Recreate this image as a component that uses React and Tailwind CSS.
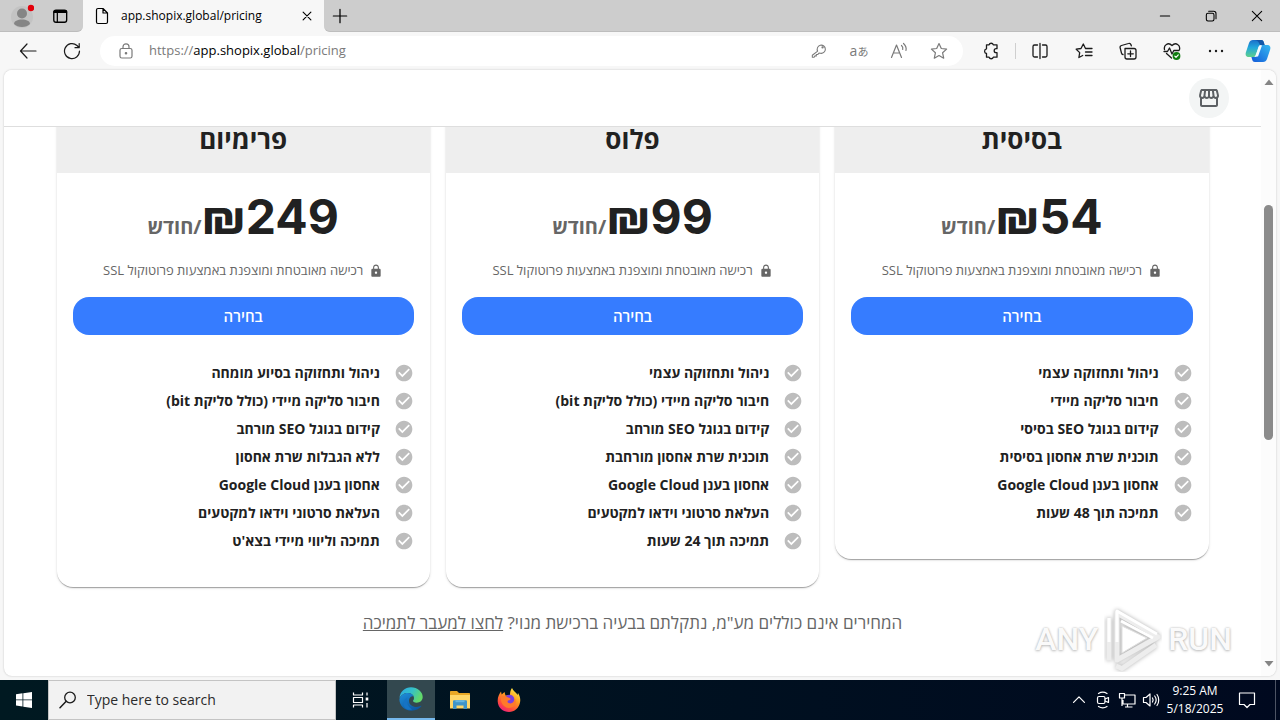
import React from "react";
import { MdOutlineStorefront, MdCheckCircle, MdLock } from "react-icons/md";

const plans = [
  {
    name: "בסיסית",
    price: "₪54",
    features: [
      "ניהול ותחזוקה עצמי",
      "חיבור סליקה מיידי",
      "קידום בגוגל SEO בסיסי",
      "תוכנית שרת אחסון בסיסית",
      "אחסון בענן Google Cloud",
      "תמיכה תוך 48 שעות",
    ],
  },
  {
    name: "פלוס",
    price: "₪99",
    features: [
      "ניהול ותחזוקה עצמי",
      "חיבור סליקה מיידי (כולל סליקת bit)",
      "קידום בגוגל SEO מורחב",
      "תוכנית שרת אחסון מורחבת",
      "אחסון בענן Google Cloud",
      "העלאת סרטוני וידאו למקטעים",
      "תמיכה תוך 24 שעות",
    ],
  },
  {
    name: "פרימיום",
    price: "₪249",
    features: [
      "ניהול ותחזוקה בסיוע מומחה",
      "חיבור סליקה מיידי (כולל סליקת bit)",
      "קידום בגוגל SEO מורחב",
      "ללא הגבלות שרת אחסון",
      "אחסון בענן Google Cloud",
      "העלאת סרטוני וידאו למקטעים",
      "תמיכה וליווי מיידי בצא'ט",
    ],
  },
];

const Icon = ({ size = 18, className = "", children }) => (
  <svg
    width={size}
    height={size}
    viewBox="0 0 18 18"
    fill="none"
    stroke="currentColor"
    strokeWidth="1.2"
    strokeLinecap="round"
    strokeLinejoin="round"
    className={className}
    aria-hidden="true"
  >
    {children}
  </svg>
);

const BarButton = ({ label, className = "w-11", children }) => (
  <button aria-label={label} className={`flex h-full shrink-0 items-center justify-center ${className}`}>
    {children}
  </button>
);

const TabStrip = () => (
  <div className="flex h-8 shrink-0 bg-[#f7f7f7]">
    <div className="flex w-[83px] shrink-0 items-center rounded-br-md border-b border-[#bdbdbd] bg-[#cdcdcd]">
      <BarButton label="Profile">
        <svg width="24" height="26" viewBox="0 0 24 26" aria-hidden="true">
          <circle cx="12" cy="14" r="11" fill="#c3c3c3" />
          <circle cx="12" cy="10.500" r="5" fill="#858585" />
          <path d="M4 21c0-3 3.500-4.500 8-4.500s8 1.500 8 4.500c-2 2-4.500 3-8 3s-6-1-8-3z" fill="#858585" />
          <circle cx="21" cy="5" r="3.200" fill="#e3000b" />
        </svg>
      </BarButton>
      <BarButton label="Tab actions" className="w-8">
        <Icon size={16}>
          <rect x="2" y="2.500" width="14.500" height="13.500" rx="2.500" strokeWidth="1.500" />
          <path d="M2.500 4.500h13.500M3.500 3.500h12" strokeWidth="2.400" />
          <path d="M6 5v10.500" strokeWidth="1.400" />
        </Icon>
      </BarButton>
    </div>
    <div className="flex w-[241px] shrink-0 items-center pr-2 pl-2.5">
      <Icon size={18} className="shrink-0">
        <path d="M3.500 3a1.500 1.500 0 0 1 1.500-1.500h5l4.500 4.500v9a1.500 1.500 0 0 1-1.500 1.500H5A1.500 1.500 0 0 1 3.500 15zM10 1.500V6h4.500" />
      </Icon>
      <span className="ml-2.5 flex-1 text-xs whitespace-nowrap text-black">app.shopix.global/pricing</span>
      <button aria-label="Close tab" className="p-1">
        <Icon size={10}>
          <path d="M2 2l14 14M16 2L2 16" strokeWidth="2" />
        </Icon>
      </button>
    </div>
    <div className="flex flex-1 items-center justify-between rounded-bl-md border-b border-[#bdbdbd] bg-[#cdcdcd]">
      <BarButton label="New tab" className="w-8">
        <Icon size={16}>
          <path d="M9 1.500v15M1.500 9h15" strokeWidth="1.400" />
        </Icon>
      </BarButton>
      <div className="flex h-full">
        <BarButton label="Minimize" className="w-[46px]">
          <Icon size={12}>
            <path d="M2 9h14" strokeWidth="1.600" />
          </Icon>
        </BarButton>
        <BarButton label="Restore" className="w-[46px]">
          <Icon size={12}>
            <rect x="2" y="5" width="11.500" height="11.500" rx="2.500" strokeWidth="1.600" />
            <path d="M5.500 2H13a3.500 3.500 0 0 1 3.500 3.500V13" strokeWidth="1.600" />
          </Icon>
        </BarButton>
        <BarButton label="Close" className="w-[46px]">
          <Icon size={12}>
            <path d="M2 2l14 14M16 2L2 16" strokeWidth="1.600" />
          </Icon>
        </BarButton>
      </div>
    </div>
  </div>
);

const AddressBar = () => (
  <div className="flex h-[30px] min-w-0 flex-1 items-center rounded-full bg-white pr-1 pl-[17px] text-[#7a7a7a]">
    <Icon size={18} className="shrink-0">
      <rect x="3" y="6.500" width="12" height="9.500" rx="1.800" />
      <path d="M6 6.500V4.800a3 3 0 0 1 6 0v1.700" />
      <circle cx="9" cy="11.300" r="0.700" fill="currentColor" />
    </Icon>
    <label className="relative ml-3.5 flex h-full flex-1 items-center text-[13px] whitespace-nowrap">
      <span>
        https://<span className="text-black">app.shopix.global</span>/pricing
      </span>
      <input type="text" aria-label="Address and search bar" className="absolute inset-0 opacity-0" />
    </label>
    <BarButton label="Passwords" className="w-10">
      <Icon size={16}>
        <path d="M7.500 9.200A4.600 4.600 0 1 1 10.500 11.500L9 11.300 7.500 13H6v1.500H4.500L3.500 16H1.500v-2.200z" />
        <circle cx="13" cy="5" r="0.700" />
      </Icon>
    </BarButton>
    <BarButton label="Translate" className="w-10">
      <span className="font-['Open_Sans','Noto_Sans_CJK_JP',sans-serif] text-sm leading-none whitespace-nowrap">
        a<span className="text-[11px]">あ</span>
      </span>
    </BarButton>
    <BarButton label="Read aloud" className="w-10">
      <Icon>
        <path d="M1.500 15.500L6.500 3l5 12.500M3.300 11h6.400" />
        <path d="M11.500 3.500c1.200 1 1.600 2.500 1.200 4M13.500 1.500c2.300 2 3 4.500 2.500 7" />
      </Icon>
    </BarButton>
    <BarButton label="Add to favorites" className="w-10">
      <Icon>
        <path d="M9 1.500l2.300 5 5.300.6-4 3.700 1.100 5.400L9 13.500l-4.700 2.700 1.100-5.400-4-3.700 5.300-.6z" />
      </Icon>
    </BarButton>
  </div>
);

const Toolbar = () => (
  <div className="flex h-[38px] shrink-0 items-center bg-[#f7f7f7] pr-0.5 pl-1.5 text-[#1b1b1b]">
    <BarButton label="Back">
      <Icon size={18}>
        <path d="M17 9H1.500M8 2L1.500 9 8 16" />
      </Icon>
    </BarButton>
    <BarButton label="Refresh">
      <Icon size={18}>
        <path d="M16.500 9A7.500 7.500 0 1 1 14 3.500L16 5.500M16.200 1.500v4.200H12" />
      </Icon>
    </BarButton>
    <div className="flex min-w-0 flex-1 pr-1.5 pl-1.5">
      <AddressBar />
    </div>
    <BarButton label="Extensions">
      <Icon size={18}>
        <path d="M4.500 2.800h2.600a2.200 2.200 0 0 1 4.200 0H15v3.900h-.8a2 2 0 0 0 0 4h.8v4.500h-3.700a2.200 2.200 0 0 1-4.200 0H4.500v-3.700a2.400 2.400 0 0 1 0-4.700z" strokeWidth="1.300" />
      </Icon>
    </BarButton>
    <div className="mr-0.5 ml-0.5 h-4 w-px bg-[#cfcfcf]" />
    <BarButton label="Split screen">
      <Icon>
        <path d="M9 1.500v15M6.500 3H3.500A1.500 1.500 0 0 0 2 4.500v9A1.500 1.500 0 0 0 3.500 15h3M11.500 3h3A1.500 1.500 0 0 1 16 4.500v9a1.500 1.500 0 0 1-1.500 1.500h-3" strokeWidth="1.300" />
      </Icon>
    </BarButton>
    <BarButton label="Favorites">
      <Icon>
        <path d="M10.500 6.500L8.300 2 6 6.500l-4.800.7 3.500 3.400-.8 4.900 3.800-2M10.500 6.500h6.500M10.500 10H17M10.500 13.500H17" strokeWidth="1.300" />
      </Icon>
    </BarButton>
    <BarButton label="Collections">
      <Icon>
        <path d="M6 6.500h9a2 2 0 0 1 2 2V15a2 2 0 0 1-2 2H8a2 2 0 0 1-2-2zM11.500 9v5.500M8.800 11.800h5.500M4 12.500a2 2 0 0 1-1.500-1.300L1.200 6A2 2 0 0 1 2.500 3.500l7-2a2 2 0 0 1 2.500 1.300l.3 1" strokeWidth="1.300" />
      </Icon>
    </BarButton>
    <BarButton label="Browser essentials">
      <Icon>
        <path d="M1.500 7.500C.5 3.500 5-.5 9 3.500c4-4 8.500 0 7.500 4M1 9.500h3.500l2-3.500 2.500 6 1.800-3.500H16M3.500 11.500L8.500 16" strokeWidth="1.300" />
        <circle cx="13.500" cy="14" r="3.900" fill="#107c10" stroke="none" />
        <path d="M11.800 14.200l1.200 1.200 2.300-2.500" stroke="#fff" />
      </Icon>
    </BarButton>
    <BarButton label="Settings and more">
      <Icon>
        <g fill="currentColor" stroke="none">
          <circle cx="3" cy="9" r="1.200" />
          <circle cx="9" cy="9" r="1.200" />
          <circle cx="15" cy="9" r="1.200" />
        </g>
      </Icon>
    </BarButton>
    <BarButton label="Copilot" className="w-10">
      <svg width="26" height="24" viewBox="0 0 26 24" aria-hidden="true">
        <defs>
          <linearGradient id="cpA" x1="0" y1="0" x2="0" y2="1">
            <stop offset="0" stopColor="#1b6fc9" />
            <stop offset="0.450" stopColor="#22a8dc" />
            <stop offset="1" stopColor="#5fd08c" />
          </linearGradient>
          <linearGradient id="cpB" x1="1" y1="0" x2="0" y2="1">
            <stop offset="0" stopColor="#35b9f1" />
            <stop offset="1" stopColor="#1259d8" />
          </linearGradient>
        </defs>
        <path d="M8 1h8c2 0 2.500 1 3 3l.6 2h-3.400c-1.700 0-2.500 1-3 2.500L11 16c-.6 1.500-1.500 2-3 2H4c-3 0-4-2-3-5L4 4c.7-2 2-3 4-3z" fill="url(#cpA)" />
        <path d="M18 23h-8c-2 0-2.500-1-3-3l-.6-2h3.400c1.700 0 2.500-1 3-2.500L15 8c.6-1.500 1.500-2 3-2h4c3 0 4 2 3 5l-3 9c-.7 2-2 3-4 3z" fill="url(#cpB)" />
        <path d="M8 1h8c2 0 2.500 1 3 3l.6 2H15c-1.500-4-3-5-7-5z" fill="#1357a8" />
        <path d="M14.500 6.500h2.500L13 17.500h-3z" fill="#f4fbff" />
      </svg>
    </BarButton>
  </div>
);

const PlanCard = ({ plan }) => (
  <article className="overflow-hidden rounded-2xl bg-white text-[#212121] shadow-[0_2px_1px_-1px_rgba(0,0,0,0.2),0_1px_1px_0_rgba(0,0,0,0.14),0_1px_3px_0_rgba(0,0,0,0.12)]">
    <header className="bg-[#eeeeee] px-4 pt-4 pb-5 text-center">
      <h2 className="text-[26px] leading-7 font-bold">{plan.name}</h2>
    </header>
    <div className="px-4 pt-4 pb-8">
      <div className="flex h-14 items-baseline justify-center">
        <span className="font-[Inter,'Open_Sans',sans-serif] text-5xl leading-14 font-bold">{plan.price}</span>
        <span className="text-xl font-bold text-[#666666]">/חודש</span>
      </div>
      <p className="mt-4 flex h-5 items-center justify-center gap-1.5 text-[13px] whitespace-nowrap text-[#666666]">
        <MdLock size={14} />
        רכישה מאובטחת ומוצפנת באמצעות פרוטוקול SSL
      </p>
      <button className="mt-4 h-[38px] w-full rounded-2xl bg-[#367cff] text-[15px] font-semibold text-white">בחירה</button>
      <ul className="mt-6">
        {plan.features.map((feature) => (
          <li key={feature} className="flex h-7 items-center gap-3.5 text-sm font-bold whitespace-nowrap">
            <MdCheckCircle size={20} className="text-[#bdbdbd]" />
            {feature}
          </li>
        ))}
      </ul>
    </div>
  </article>
);

const PricingPage = () => (
  <main dir="rtl" lang="he" className="flex min-w-0 flex-1 flex-col overflow-hidden">
    <nav className="z-10 flex h-[57px] shrink-0 items-center border-b border-[#dedede] bg-white px-8">
      <button aria-label="חנות" className="flex size-10 items-center justify-center rounded-full bg-[#f3f5f5] text-[#5c6064]">
        <MdOutlineStorefront size={24} />
      </button>
    </nav>
    <div className="min-h-0 flex-1 overflow-hidden">
      {/* the page is scrolled a little, so the plan headings slide under the nav */}
      <div className="mx-auto -mt-[18px] max-w-[1200px] px-6">
        <div className="grid grid-cols-3 items-start gap-4">
          {plans.map((plan) => (
            <PlanCard key={plan.name} plan={plan} />
          ))}
        </div>
        <p className="mt-6 text-center text-[17px] leading-6 text-[#666666]">
          המחירים אינם כוללים מע"מ, נתקלתם בבעיה ברכישת מנוי?{" "}
          <a href="#support" className="underline">
            לחצו למעבר לתמיכה
          </a>
        </p>
      </div>
    </div>
  </main>
);

const Scrollbar = () => (
  <div className="flex w-[15px] shrink-0 flex-col items-center bg-[#fcfcfc] py-2 text-[#858585]">
    <svg width="10" height="8" viewBox="0 0 10 8" aria-hidden="true">
      <path d="M5 1.500L9.500 7h-9z" fill="currentColor" />
    </svg>
    <div className="flex w-full flex-1 flex-col items-center">
      <div className="flex-[119]" />
      <div className="w-[9px] flex-[235] rounded-full bg-[#8b8b8b]" />
      <div className="flex-[220]" />
    </div>
    <svg width="10" height="8" viewBox="0 0 10 8" aria-hidden="true">
      <path d="M5 6.500L9.500 1h-9z" fill="currentColor" />
    </svg>
  </div>
);

const Watermark = () => (
  <div className="pointer-events-none absolute right-[44px] bottom-1 flex items-center gap-1.5 font-[Roboto,sans-serif] text-[32px] leading-none font-medium text-[#fafafa] [text-shadow:0_0_2px_#b4b4b4,0_1px_3px_#c4c4c4]">
    <span>ANY</span>
    <svg width="58" height="66" viewBox="0 0 58 66" fill="none" strokeLinejoin="round" aria-hidden="true">
      <g className="drop-shadow-[0_0_2px_#b0b0b0]">
        <path d="M5 12v42.500M12 60l6 2.500L52 39M13 7v47L54 31z" stroke="#ededed" strokeWidth="5" />
        <path d="M5 12v24M13 36V5l40 23M17 15l32 17" stroke="#fff" strokeWidth="3" />
        <path d="M18 20v27l25-15z" fill="#fff" stroke="#e0e0e0" />
      </g>
    </svg>
    <span>RUN</span>
  </div>
);

const Taskbar = () => (
  <footer className="flex h-10 shrink-0 bg-linear-to-r from-[#001921] to-[#00091f] text-white">
    <BarButton label="Start" className="w-12">
      <svg width="16" height="16" viewBox="0 0 16 16" fill="#fff" aria-hidden="true">
        <path d="M0 2.200l6.500-.9v6.200H0zM7.300 1.200L16 0v7.500H7.300zM0 8.300h6.500v6.200L0 13.600zM7.300 8.300H16V16l-8.700-1.300z" />
      </svg>
    </BarButton>
    <label className="flex w-72 shrink-0 items-center border border-[#c4c4c4] bg-[#f2f2f2] pl-2.5 text-[#1b1b1b]">
      <Icon size={18} className="shrink-0">
        <circle cx="11" cy="6.500" r="5.300" strokeWidth="1.300" />
        <path d="M7.200 10.300L1 16.800" strokeWidth="1.500" />
      </Icon>
      <input
        type="text"
        aria-label="Search"
        placeholder="Type here to search"
        className="ml-2.5 min-w-0 flex-1 bg-transparent text-sm outline-none placeholder:text-[#2b2b2b]"
      />
    </label>
    <BarButton label="Task view" className="w-[50px]">
      <Icon>
        <path d="M1.500 1.500v2.500h9V1.500M1.500 16.500V14h9v2.500M1.500 6.500h9v5h-9zM15 1.500v3M15 12v4.500" strokeLinecap="butt" />
        <rect x="13.700" y="6.500" width="2.600" height="3" fill="currentColor" stroke="none" />
      </Icon>
    </BarButton>
    <BarButton label="Microsoft Edge" className="ml-px w-12 border-b-2 border-[#76b9ed] bg-[#33484f]">
      <svg width="24" height="24" viewBox="0 0 24 24" aria-hidden="true">
        <defs>
          <linearGradient id="edA" x1="0" y1="0" x2="1" y2="0.400">
            <stop offset="0" stopColor="#2aa7e6" />
            <stop offset="0.550" stopColor="#35c1c8" />
            <stop offset="1" stopColor="#62d96a" />
          </linearGradient>
          <linearGradient id="edB" x1="0" y1="0" x2="0.600" y2="1">
            <stop offset="0" stopColor="#1f8fdb" />
            <stop offset="1" stopColor="#0c59a4" />
          </linearGradient>
        </defs>
        <path d="M.5 11C1 4.500 6 .3 12 .3c6.500 0 11.700 4.700 11.700 9.700 0 3.500-2.700 5.700-6 5.700-2.500 0-3.700-.8-3.700-1.600 0-.7 1-1.200 1-3C15 8 12 6 8.500 6 5 6 2 8 .5 11z" fill="url(#edA)" />
        <path d="M.4 12C1.500 8.500 5 6 8.500 6c3.300 0 5.700 1.700 6.300 3.500C13.500 8.800 10 10 10 14c0 3.500 3.500 6 7.500 6 1.800 0 3.200-.5 4.300-1.200.5-.3.800 0 .5.500-2 2.800-5.800 4.400-9.800 4.400C5.500 23.700.2 18.500.4 12z" fill="url(#edB)" />
        <path d="M8.500 10.500c-1.500 3-1 8 4.500 12-2.500.5-5 .3-6.500-1-3-3-3-9 2-11z" fill="#1673c4" />
      </svg>
    </BarButton>
    <BarButton label="File Explorer" className="w-[49px]">
      <svg width="22" height="20" viewBox="0 0 22 20" aria-hidden="true">
        <path d="M1 2c0-.6.400-1 1-1h6l2 2h10c.6 0 1 .4 1 1v14H1z" fill="#e9a825" />
        <path d="M1 5h20v13.500H1z" fill="#ffd768" />
        <path d="M4 19v-7.500c0-.8.500-1.300 1.300-1.300h11.400c.8 0 1.300.5 1.300 1.300V19h-3.500v-3.500h-7V19z" fill="#3f95c9" />
        <path d="M6.500 10.200h9v2h-9z" fill="#67b7e0" />
      </svg>
    </BarButton>
    <BarButton label="Firefox" className="w-[49px]">
      <svg width="24" height="26" viewBox="0 0 24 26" aria-hidden="true">
        <defs>
          <linearGradient id="ffA" x1="0.800" y1="0" x2="0.200" y2="1">
            <stop offset="0" stopColor="#fff04a" />
            <stop offset="0.400" stopColor="#ff9a1f" />
            <stop offset="0.750" stopColor="#ff4a3d" />
            <stop offset="1" stopColor="#e8188a" />
          </linearGradient>
        </defs>
        <path d="M15 1c1 3 4.500 4.500 5.500 7l.5-2c2 3 2.700 6 2 9.500C22 21 17.500 25 12 25S1 21 .7 14.500C.5 10.500 2 7 4 4.500l.7 3L7.500 5l1 3.500L13 8c0-3 .5-5 2-7z" fill="url(#ffA)" />
        <circle cx="12.500" cy="12.500" r="4.800" fill="#7a3fe0" />
        <path d="M4 10c2.500-2 5.500-1 7 .5 1.500.2 2.800.8 2.500 1.700-.5 1.300-2.500.8-3 2.300 0 1.500 2.500 2.500 4.500 1.500 2-1 3-3 2.500-5 2 2.500 1.500 6.500-1 8.500C13.500 21.500 9.500 21.500 7 19c-2.500-2.300-3.500-5.500-3-9z" fill="#ff7a2a" />
      </svg>
    </BarButton>
    <div className="flex-1" />
    <BarButton label="Show hidden icons" className="w-6">
      <Icon size={14}>
        <path d="M2 12l7-7 7 7" strokeWidth="1.600" />
      </Icon>
    </BarButton>
    <BarButton label="Meet now" className="w-6">
      <Icon size={18}>
        <rect x="3.500" y="5.500" width="7.500" height="7" rx="1.500" />
        <path d="M11 8l3.500-1.500v5L11 10M4.500 2.500c2.500-1.500 6-1.500 8.500 0M4.500 15.500c2.500 1.500 6 1.500 8.500 0" />
      </Icon>
    </BarButton>
    <BarButton label="Network" className="w-6">
      <Icon size={18}>
        <path d="M6.500 4H17v9H5V9M9.500 13v3M7 16h7.500M1.500 2.500h5v4.500h-5zM4 7v8" strokeLinecap="butt" />
      </Icon>
    </BarButton>
    <BarButton label="Volume" className="w-6">
      <Icon size={18}>
        <path d="M1.500 6.500H4L8 3v12l-4-3.500H1.500zM10.500 7c.8 1.200.8 2.800 0 4M12.700 5c1.700 2.300 1.700 5.700 0 8M15 3.500c2.300 3 2.300 8 0 11" />
      </Icon>
    </BarButton>
    <button className="w-16 text-center text-xs leading-[18px] whitespace-nowrap">
      <span className="block">9:25 AM</span>
      <span className="block">5/18/2025</span>
    </button>
    <BarButton label="Notifications" className="w-10">
      <Icon size={18}>
        <path d="M1.500 2h15v11.500H12l-3 3-3-3H1.500z" />
      </Icon>
    </BarButton>
    <div className="ml-2 w-[5px] border-l border-[#4d5464]" />
  </footer>
);

export default function App() {
  return (
    <div className="flex h-screen flex-col overflow-hidden bg-[#f7f7f7] font-['Open_Sans','Noto_Sans',sans-serif]">
      <TabStrip />
      <Toolbar />
      <div className="relative mx-1 mb-1 flex min-h-0 flex-1 overflow-hidden rounded-lg bg-white shadow-[0_0_2px_#bdbdbd]">
        <PricingPage />
        <Scrollbar />
        <Watermark />
      </div>
      <Taskbar />
    </div>
  );
}
